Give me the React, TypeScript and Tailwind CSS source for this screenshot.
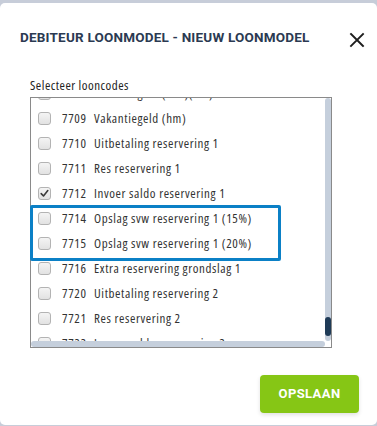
import React from "react";

const rows: { code: string; label: string; checked?: boolean }[] = [
  { code: "7708", label: "Vakantiegeld (h/d)(hm)" },
  { code: "7709", label: "Vakantiegeld (hm)" },
  { code: "7710", label: "Uitbetaling reservering 1" },
  { code: "7711", label: "Res reservering 1" },
  { code: "7712", label: "Invoer saldo reservering 1", checked: true },
  { code: "7714", label: "Opslag svw reservering 1 (15%)" },
  { code: "7715", label: "Opslag svw reservering 1 (20%)" },
  { code: "7716", label: "Extra reservering grondslag 1" },
  { code: "7720", label: "Uitbetaling reservering 2" },
  { code: "7721", label: "Res reservering 2" },
  { code: "7722", label: "Invoer saldo reservering 2" },
  { code: "7724", label: "Opslag svw reservering 2 (15%)" },
];

const bodyFont: React.CSSProperties = {
  fontFamily: "'Open Sans', 'Noto Sans', sans-serif",
  fontStretch: "condensed",
};

function Checkbox({ checked }: { checked?: boolean }) {
  return (
    <span className="relative inline-flex h-[13px] w-[13px] shrink-0 items-center justify-center rounded-[3px] border border-[#b3b3b3] bg-gradient-to-b from-[#f4f4f4] to-[#e2e2e2]">
      {checked && (
        <svg width="9" height="9" viewBox="0 0 9 9" className="block">
          <path d="M1.2 4.6 L3.5 7 L7.8 1.6" fill="none" stroke="#3a3a3a" strokeWidth="1.6" strokeLinecap="round" strokeLinejoin="round" />
        </svg>
      )}
    </span>
  );
}

export default function App() {
  return (
    <div className="h-[426px] w-[377px] overflow-hidden bg-[#c7cdd9] pt-[3px]">
      <div className="flex h-[422px] flex-col rounded-[5px] bg-white">
        <div className="flex h-[42px] items-start justify-between pl-[20px] pr-[12px] pt-[26px]">
          <h1
            className="whitespace-nowrap text-[13.5px] font-bold leading-[16px] tracking-[0.2px] text-[#2b3a52]"
            style={{ fontFamily: "Roboto, 'Liberation Sans', sans-serif" }}
          >
            DEBITEUR LOONMODEL - NIEUW LOONMODEL
          </h1>
          <svg width="16" height="16" viewBox="0 0 16 16" className="mt-[3px] shrink-0">
            <path d="M2 2 L14 14 M14 2 L2 14" stroke="#1e1e1e" strokeWidth="1.9" strokeLinecap="square" />
          </svg>
        </div>

        <div className="mt-[32px] pl-[30px] text-[13px] leading-[17px] tracking-[0.5px] text-[#222]" style={bodyFont}>
          Selecteer looncodes
        </div>

        <div className="relative ml-[30px] mt-[3px] h-[251px] w-[302px] border border-[#8a8a8a]">
          <div className="flex h-full flex-col">
            <div className="flex min-h-0 flex-1">
              <div className="min-w-0 flex-1 overflow-hidden">
                <div className="-mt-[17px]">
                  {rows.map((r) => (
                    <div
                      key={r.code}
                      className="flex h-[25px] items-center whitespace-nowrap pl-[7px] text-[13px] tracking-[0.6px] text-[#333]"
                      style={bodyFont}
                    >
                      <Checkbox checked={r.checked} />
                      <span className="ml-[11px] inline-block w-[32px]">{r.code}</span>
                      <span>{r.label}</span>
                    </div>
                  ))}
                </div>
              </div>
              <div className="relative w-[6px] shrink-0 rounded-full bg-[#c5cfdc]">
                <div className="absolute left-0 top-[219px] h-[19px] w-[6px] rounded-full bg-[#1f3b57]" />
              </div>
            </div>
            <div className="mr-[6px] h-[6px] rounded-full bg-[#c5cfdc]" />
          </div>

          <div className="pointer-events-none absolute left-[-1px] top-[107px] h-[56px] w-[251px] rounded-[2px] border-[3px] border-[#0b80c6]" />
        </div>

        <div className="mt-[27px] flex justify-end pr-[18px]">
          <button
            className="h-[38px] w-[99px] rounded-[4px] bg-[#86c615] text-[13px] font-bold tracking-[0.4px] text-white shadow-[0_2px_4px_rgba(0,0,0,0.12)]"
            style={{ fontFamily: "Roboto, 'Liberation Sans', sans-serif" }}
          >
            OPSLAAN
          </button>
        </div>
      </div>
    </div>
  );
}
